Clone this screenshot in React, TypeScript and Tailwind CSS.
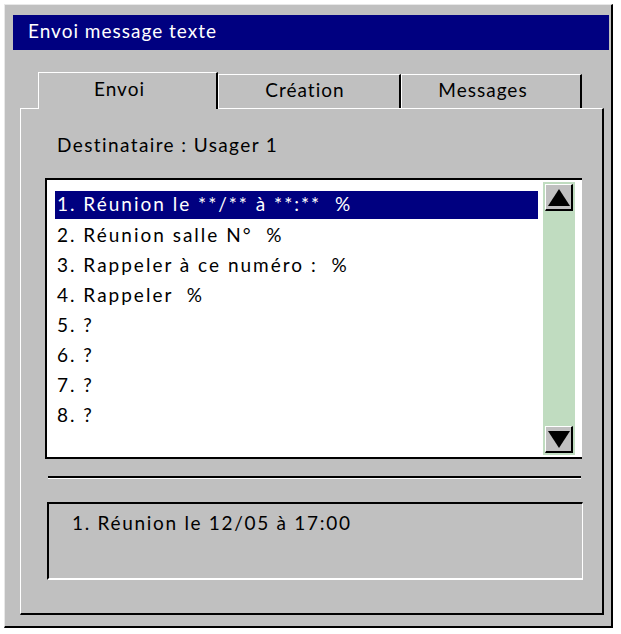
import React from 'react'

// Liste des messages préenregistrés
const messages = [
    '1. Réunion le **/** à **:**  %',
    '2. Réunion salle N°  %',
    '3. Rappeler à ce numéro :  %',
    '4. Rappeler  %',
    '5. ?',
    '6. ?',
    '7. ?',
    '8. ?',
]

const font = { fontFamily: 'Lato, "Noto Sans", sans-serif' }

const Arrow = ({ down }: { down?: boolean }) => (
    <div className="w-[28px] h-[27px] box-border bg-[#c0c0c0] border-t border-l border-white border-r-2 border-b-2 border-r-black border-b-black flex items-center justify-center">
        <svg width="22" height="17" viewBox="0 0 22 17">
            {down ? (
                <polygon points="0,0 22,0 11,17" fill="#000" />
            ) : (
                <polygon points="11,0 22,17 0,17" fill="#000" />
            )}
        </svg>
    </div>
)

const App = () => {
    return (
        <div className="min-h-screen bg-white pt-[4px] pl-[4px]" style={font}>
            <div className="w-[609px] h-[624px] box-border bg-[#c0c0c0] border-t border-l border-[#e8e8e8] border-r-2 border-b-2 border-r-black border-b-black">
                {/* Barre de titre */}
                <div className="mt-[10px] ml-[8px] w-[596px] h-[35px] bg-[#000080] text-white text-[19px] tracking-[1px] flex items-center pl-[15px] pb-[2px]">
                    Envoi message texte
                </div>

                <div className="ml-[15px] w-[584px]">
                    {/* Onglets */}
                    <div className="flex items-end pl-[18px] mt-[22px] h-[36px] text-[19px] tracking-[1px] text-black">
                        <div className="relative z-10 -mb-px w-[180px] h-[37px] box-border bg-[#c0c0c0] border-t border-l border-white border-r-2 border-r-black flex items-center justify-center pr-[16px] pb-[3px]">
                            Envoi
                        </div>
                        <div className="w-[183px] h-[34px] box-border border-t border-l border-white border-r-2 border-r-black flex items-center justify-center pr-[8px] pb-[2px]">
                            Création
                        </div>
                        <div className="w-[181px] h-[34px] box-border border-t border-l border-white border-r-2 border-r-black flex items-center justify-center pr-[16px] pb-[2px]">
                            Messages
                        </div>
                    </div>

                    {/* Panneau */}
                    <div className="h-[507px] box-border border-t border-l border-white border-r-2 border-b-2 border-r-black border-b-black">
                        <div className="ml-[36px] mt-[23px] text-[19px] tracking-[1.4px] leading-[26px] text-black">
                            Destinataire : Usager 1
                        </div>

                        {/* Liste */}
                        <div className="ml-[24px] mt-[20px] w-[537px] h-[281px] box-border bg-white border-t-2 border-l-2 border-b-2 border-black flex">
                            <div className="flex-1 pt-[11px] pl-[8px] pr-[5px]">
                                {messages.map((m, i) => (
                                    <div
                                        key={m}
                                        className={`flex items-center pl-[2px] pb-[2px] text-[19px] tracking-[2px] whitespace-pre ${
                                            i === 0 ? 'bg-[#000080] text-white h-[28px] mb-[2px]' : 'text-black h-[30px]'
                                        }`}
                                    >
                                        {m}
                                    </div>
                                ))}
                            </div>
                            <div className="w-[32px] mt-[2px] mb-[2px] mr-[7px] bg-[#c0dcc0] flex flex-col justify-between items-center py-[2px]">
                                <Arrow />
                                <Arrow down />
                            </div>
                        </div>

                        {/* Séparateur */}
                        <div className="ml-[27px] mt-[17px] w-[533px] h-[3px] box-border border-t-2 border-black border-b border-b-white" />

                        {/* Aperçu du message */}
                        <div className="ml-[26px] mt-[23px] w-[536px] h-[78px] box-border border-t-2 border-l-2 border-black border-r border-b-2 border-r-white border-b-white pl-[23px] pt-[5px] text-[19px] tracking-[1.7px] text-black">
                            1. Réunion le 12/05 à 17:00
                        </div>
                    </div>
                </div>
            </div>
        </div>
    )
}

export default App
